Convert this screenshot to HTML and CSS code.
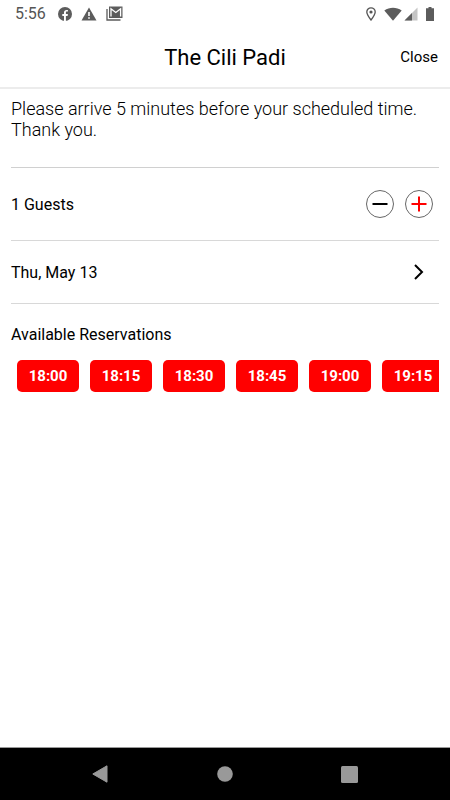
FILE: index.html
```html
<!DOCTYPE html>
<html lang="en">
<head>
<meta charset="utf-8">
<meta name="viewport" content="width=device-width, initial-scale=1">
<title>The Cili Padi</title>
<link rel="stylesheet" href="styles.css">
</head>
<body>
<div class="status">
  <span class="clock">5:56</span>
  <div class="status-icons notices">
    <svg width="14" height="14" viewBox="0 0 14 14"><circle cx="7" cy="7" r="7" fill="#5c5c5c"/><path d="M6 14V8.9H4.3V7H6V5.6c0-1.8 1-2.7 2.6-2.7h1.3v1.7h-1c-.8 0-1 .4-1 1.1V7h2L9.600 8.900H7.900V14z" fill="#fff"/></svg>
    <svg width="16" height="14" viewBox="0 0 16 14"><path d="M8 .5 15.500 13.500H.5z" fill="#5c5c5c"/><path d="M7.200 5h1.600v4H7.200zM7.200 10.200h1.600v1.600H7.200z" fill="#fff"/></svg>
    <svg width="17" height="15" viewBox="0 0 17 15"><path d="M1 3v11h13.500" fill="none" stroke="#5c5c5c" stroke-width="1.300"/><path d="M3 .5h13.500v11.500H3z" fill="#5c5c5c"/><path d="M5 10.500V2.800l4.800 3.700 4.800-3.700v7.700" fill="none" stroke="#fff" stroke-width="1.300"/></svg>
  </div>
  <div class="status-icons signals">
    <svg width="10" height="14" viewBox="0 0 10 14"><path d="M5 13C2.500 9.800.8 7.300.8 5a4.200 4.200 0 0 1 8.400 0C9.200 7.300 7.500 9.800 5 13z" fill="none" stroke="#555" stroke-width="1.300"/><circle cx="5" cy="5" r="1.600" fill="#555"/></svg>
    <svg width="18" height="14" viewBox="0 0 18 14"><path d="M.3 3.500C5.500-.3 12.500-.3 17.700 3.500L9 13.700z" fill="#5c5c5c"/></svg>
    <svg width="14" height="14" viewBox="0 0 14 14"><path d="M13.500.5v13H.5z" fill="#c4c4c4"/><path d="M8 6v7.500H.5z" fill="#5c5c5c"/></svg>
    <svg width="8" height="14" viewBox="0 0 8 14"><path d="M2.500 0h3v1.300H8V14H0V1.300h2.500z" fill="#5c5c5c"/></svg>
  </div>
</div>
<header class="header">
  <h1>The Cili Padi</h1>
  <button class="close" type="button">Close</button>
</header>
<main class="content">
  <p class="message">Please arrive 5 minutes before your scheduled time. Thank you.</p>
  <section class="row guests">
    <span>1 Guests</span>
    <div class="stepper">
      <button type="button" aria-label="Fewer guests"><svg width="28" height="28" viewBox="0 0 28 28"><circle cx="14" cy="14" r="13.500" fill="none" stroke="#666"/><path d="M6.500 14h15" stroke="#000" stroke-width="2"/></svg></button>
      <button type="button" aria-label="More guests"><svg width="28" height="28" viewBox="0 0 28 28"><circle cx="14" cy="14" r="13.500" fill="none" stroke="#666"/><path d="M6.500 14h15M14 6.500v15" stroke="red" stroke-width="2"/></svg></button>
    </div>
  </section>
  <button class="row date" type="button">
    <span>Thu, May 13</span>
    <svg width="10" height="16" viewBox="0 0 10 16"><path d="M1 1l7 7-7 7" fill="none" stroke="#000" stroke-width="2"/></svg>
  </button>
  <h2>Available Reservations</h2>
  <div class="times">
    <button type="button">18:00</button>
    <button type="button">18:15</button>
    <button type="button">18:30</button>
    <button type="button">18:45</button>
    <button type="button">19:00</button>
    <button type="button">19:15</button>
  </div>
</main>
<nav class="nav">
  <button type="button" aria-label="Back"><svg width="16" height="18" viewBox="0 0 16 18"><path d="M15 .8v16.400L.8 9z" fill="#999" stroke="#999" stroke-linejoin="round"/></svg></button>
  <button type="button" aria-label="Home"><svg width="16" height="16" viewBox="0 0 16 16"><circle cx="8" cy="8" r="7.800" fill="#999"/></svg></button>
  <button type="button" aria-label="Recent apps"><svg width="17" height="17" viewBox="0 0 17 17"><rect width="17" height="17" rx="1.500" fill="#999"/></svg></button>
</nav>
</body>
</html>
```
FILE: styles.css
```css
* {
  box-sizing: border-box;
}

body {
  margin: 0;
  min-height: 100vh;
  display: flex;
  flex-direction: column;
  background: #fff;
  color: #000;
  font-family: Roboto, "Liberation Sans", sans-serif;
}

button {
  margin: 0;
  padding: 0;
  border: 0;
  background: none;
  color: inherit;
  font: inherit;
  cursor: pointer;
}

svg {
  display: block;
}

.status {
  display: flex;
  align-items: center;
  height: 27px;
  padding: 0 16px 0 15px;
}

.clock {
  color: #555;
  font-size: 16px;
}

.status-icons {
  display: flex;
  align-items: center;
}

.notices {
  gap: 9px;
  margin-left: 12px;
}

.signals {
  gap: 8px;
  margin-left: auto;
}

.signals svg:nth-child(3) {
  margin-left: -6px;
}

.header {
  display: grid;
  grid-template-columns: 1fr auto 1fr;
  align-items: center;
  height: 62px;
  padding: 0 12px;
  border-bottom: 2px solid #ececec;
}

.header h1 {
  grid-column: 2;
  margin: 0;
  font-size: 22px;
  font-weight: 400;
}

.close {
  justify-self: end;
  font-size: 15px;
  font-weight: 400;
}

.content {
  flex: 1;
  min-width: 0;
  padding: 0 11px;
}

.message {
  margin: 0;
  padding: 9px 0 27px;
  border-bottom: 1px solid #d0d0d0;
  font-size: 18px;
  font-weight: 300;
  line-height: 21px;
}

.row {
  display: flex;
  align-items: center;
  justify-content: space-between;
  width: 100%;
  border-bottom: 1px solid #d8d8d8;
  font-size: 16px;
  font-weight: 400;
}

.guests {
  height: 73px;
  padding-right: 6px;
}

.stepper {
  display: flex;
  gap: 11px;
}

.date {
  height: 63px;
  padding-right: 15px;
}

h2 {
  margin: 0;
  padding: 21px 0 15px;
  font-size: 16px;
  line-height: 20px;
  font-weight: 400;
}

.times {
  display: flex;
  gap: 11px;
  padding-left: 6px;
  overflow-x: auto;
  scrollbar-width: none;
}

.times button {
  flex: 0 0 62px;
  height: 32px;
  border-radius: 5px;
  background: red;
  color: #fff;
  font-size: 15px;
  font-weight: 700;
}

.nav {
  display: grid;
  grid-template-columns: repeat(3, 1fr);
  height: 53px;
  padding: 0 38px 0 37px;
  border-top: 1px solid #999;
  background: #000;
}

.nav button {
  display: grid;
  place-items: center;
}
```
